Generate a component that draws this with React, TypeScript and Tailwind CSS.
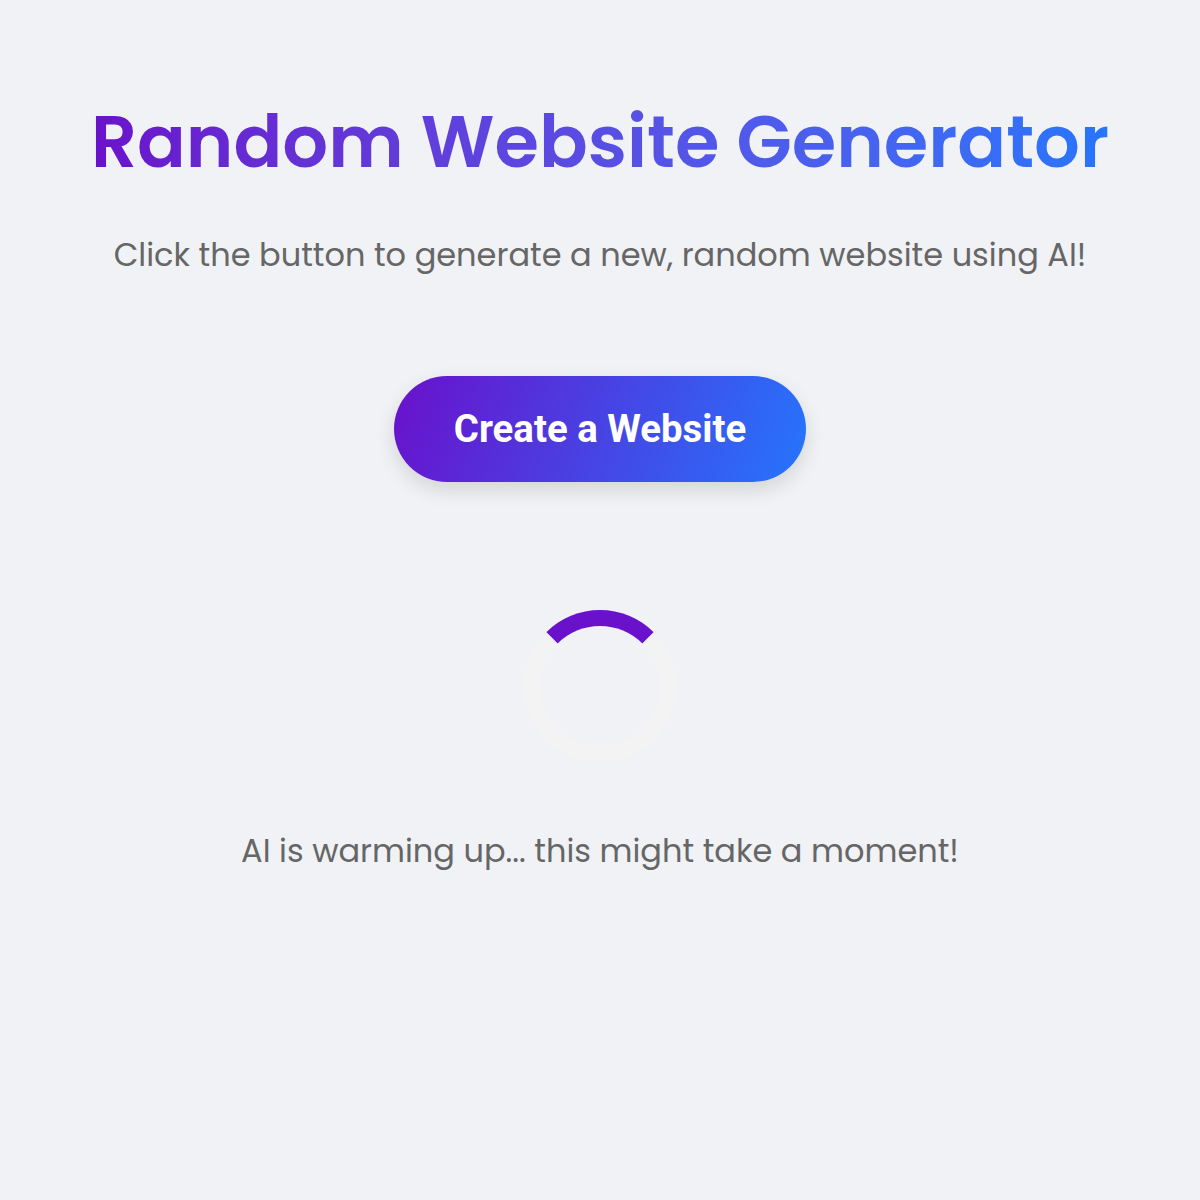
import React from 'react';

const font = { fontFamily: 'Poppins, Inter, "Noto Sans", sans-serif' };

export default function App() {
    return (
        <div className="min-h-screen w-full bg-[#f0f2f5] flex flex-col items-center" style={font}>
            <h1 className="mt-[106px] text-[72px] leading-[72px] font-semibold text-transparent bg-clip-text bg-gradient-to-r from-[#6a11cb] to-[#2575fc]">
                Random Website Generator
            </h1>

            <p className="mt-[57px] text-[32px] leading-[40px] text-[#666666]">
                Click the button to generate a new, random website using AI!
            </p>

            <button
                className="mt-[101px] px-[60px] py-[33px] rounded-full text-white text-[38.4px] leading-[40px] font-bold bg-[linear-gradient(110deg,#6a11cb,#2575fc)] shadow-[0_8px_20px_rgba(0,0,0,0.12)]"
                style={{ fontFamily: 'Roboto, "Liberation Sans", sans-serif' }}
            >
                Create a Website
            </button>

            <div className="mt-[128px] w-[152px] h-[152px] rounded-full border-[16px] border-[#f3f3f3] border-t-[#6a11cb]" />

            <p className="mt-[69px] text-[32px] leading-[40px] text-[#666666]">
                AI is warming up... this might take a moment!
            </p>
        </div>
    );
}
